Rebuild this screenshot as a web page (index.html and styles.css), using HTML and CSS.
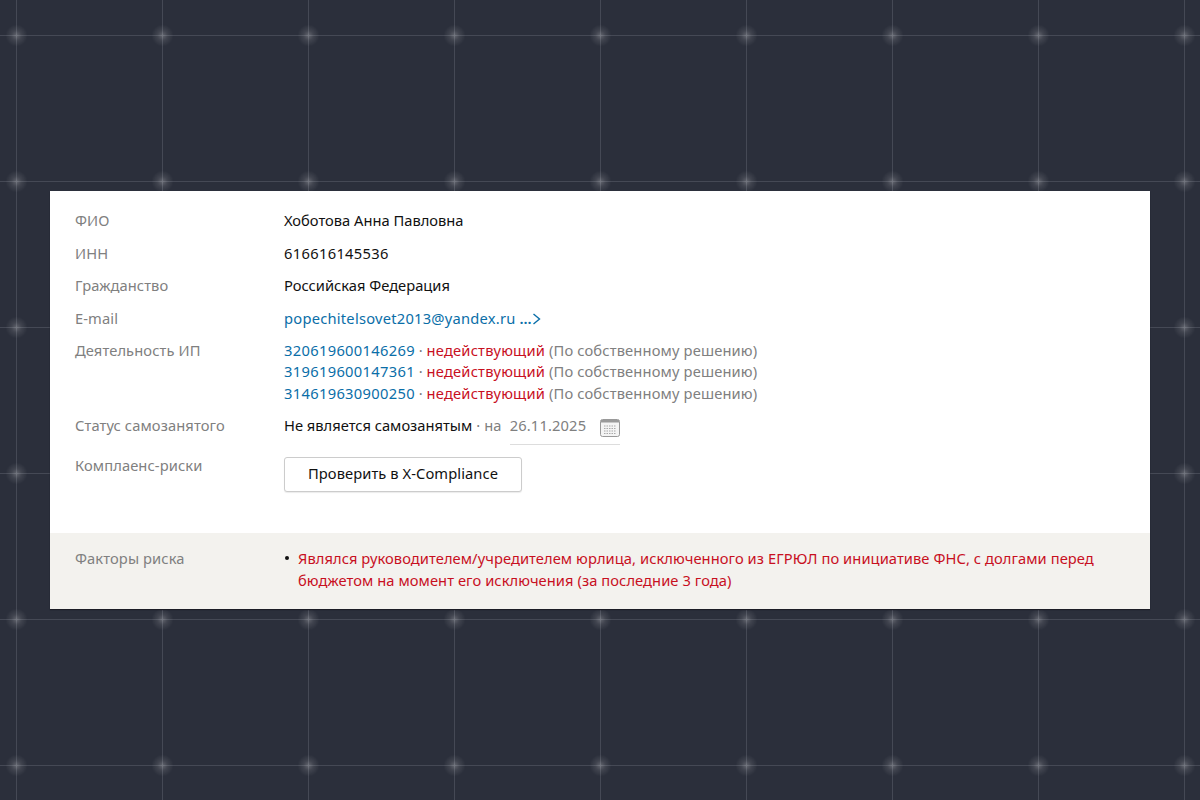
FILE: index.html
```html
<!DOCTYPE html>
<html lang="ru">

<head>
    <meta charset="UTF-8">
    <meta name="viewport" content="width=device-width, initial-scale=1.0">
    <title>Хоботова Анна Павловна</title>
    <link rel="stylesheet" href="styles.css">
</head>

<body>
    <div class="card">
        <div class="details">
            <div class="row">
                <div class="label">ФИО</div>
                <div class="value">Хоботова Анна Павловна</div>
            </div>
            <div class="row">
                <div class="label">ИНН</div>
                <div class="value num">616616145536</div>
            </div>
            <div class="row">
                <div class="label">Гражданство</div>
                <div class="value">Российская Федерация</div>
            </div>
            <div class="row">
                <div class="label">E-mail</div>
                <div class="value"><a href="#" class="email">popechitelsovet2013@yandex.ru</a> <a href="#" class="more">...<svg width="9" height="12" viewBox="0 0 9 12"><path d="M1.500 1l6 5-6 5" fill="none" stroke="#0a6ea8" stroke-width="1.400"/></svg></a></div>
            </div>
            <div class="row">
                <div class="label">Деятельность ИП</div>
                <div class="value ip-list">
                    <div class="ip-line"><a href="#" class="num">320619600146269</a> <span class="dot">·</span> <span class="bad">недействующий</span> <span class="note">(По собственному решению)</span></div>
                    <div class="ip-line"><a href="#" class="num">319619600147361</a> <span class="dot">·</span> <span class="bad">недействующий</span> <span class="note">(По собственному решению)</span></div>
                    <div class="ip-line"><a href="#" class="num">314619630900250</a> <span class="dot">·</span> <span class="bad">недействующий</span> <span class="note">(По собственному решению)</span></div>
                </div>
            </div>
            <div class="row row-status">
                <div class="label">Статус самозанятого</div>
                <div class="value status">
                    <span>Не является самозанятым</span>
                    <span class="dot">·</span>
                    <span class="note">на</span>
                    <span class="date">
                        <span class="note num">26.11.2025</span>
                        <svg width="20" height="18" viewBox="0 0 20 18">
                            <rect x="0.5" y="0.5" width="19" height="17" rx="2" fill="#f4f4f4" stroke="#999"/>
                            <rect x="1" y="1" width="18" height="2.500" fill="#9a9a9a"/>
                            <path d="M4 7h12M4 9.500h12M4 12h12M4 14.500h12" stroke="#a8a8a8" stroke-width="1.200" stroke-dasharray="1.500 1"/>
                        </svg>
                    </span>
                </div>
            </div>
            <div class="row row-risk">
                <div class="label">Комплаенс-риски</div>
                <div class="value"><button>Проверить в X-Compliance</button></div>
            </div>
        </div>
        <div class="factors">
            <div class="label">Факторы риска</div>
            <ul>
                <li><span class="bad">Являлся руководителем/учредителем юрлица, исключенного из ЕГРЮЛ по инициативе ФНС, с долгами перед бюджетом на момент его исключения (за последние 3 года)</span></li>
            </ul>
        </div>
    </div>
</body>

</html>
```
FILE: styles.css
```css
body {
    margin: 0;
    height: 800px;
    overflow: hidden;
    font-family: "Noto Sans", Arial, sans-serif;
    font-size: 14.700px;
    line-height: 21.500px;
    color: #111;
    background-color: #2b2f3b;
    background-image:
        radial-gradient(circle at 16.500px 35.500px, rgba(255, 255, 255, 0.26) 0, rgba(255, 255, 255, 0.1) 5px, rgba(255, 255, 255, 0) 11px),
        linear-gradient(to right, #454955 1px, transparent 1px),
        linear-gradient(to bottom, #454955 1px, transparent 1px);
    background-size: 146px 146px;
    background-position: 0 0, 16px 0, 0 35px;
    padding-top: 191px;
    box-sizing: border-box;
}

.card {
    width: 1100px;
    margin-left: 50px;
    background: #fff;
    box-shadow: 0 1px 1px #1b1d25;
}

.details {
    padding: 19px 25px 41px;
}

.row {
    display: grid;
    grid-template-columns: 209px 1fr;
    margin-bottom: 11px;
}

.row-status {
    margin-bottom: 10px;
}

.row-risk {
    margin-bottom: 0;
}

.ip-list {
    margin-top: -0.2px;
}

.label {
    color: #808080;
    letter-spacing: 0.1px;
}

.num {
    letter-spacing: 0.33px;
}

a {
    color: #0a6ea8;
    text-decoration: none;
}

.email {
    letter-spacing: 0.24px;
}

.more {
    font-weight: 600;
}

.more svg {
    vertical-align: -1px;
}

.dot {
    color: #777;
}

.bad {
    color: #c8101f;
    letter-spacing: 0.2px;
}

.note {
    color: #808080;
    letter-spacing: 0.15px;
}

.status {
    display: flex;
    align-items: flex-start;
    column-gap: 4px;
}

.date {
    display: flex;
    align-items: flex-start;
    justify-content: space-between;
    width: 110px;
    height: 30px;
    margin-left: 4px;
    box-sizing: border-box;
    border-bottom: 1px solid #ddd;
}

.date svg {
    margin-top: 4px;
}

button {
    width: 238px;
    height: 35px;
    margin-top: 2px;
    padding: 0 0 2px;
    font: inherit;
    letter-spacing: 0.08px;
    color: #111;
    background: #fff;
    border: 1px solid #ccc;
    border-radius: 3px;
    box-shadow: 0 1px 1px rgba(0, 0, 0, 0.08);
}

.factors {
    display: grid;
    grid-template-columns: 209px 1fr;
    line-height: 22px;
    padding: 14px 25px 18px;
    background: #f3f2ee;
}

ul {
    margin: 0;
    padding: 0;
    list-style: none;
}

.factors .bad {
    letter-spacing: 0.07px;
}

li {
    position: relative;
    padding-left: 14px;
    max-width: 830px;
}

li::before {
    content: "";
    position: absolute;
    left: 1px;
    top: 9px;
    width: 4px;
    height: 4px;
    border-radius: 50%;
    background: #111;
}
```
